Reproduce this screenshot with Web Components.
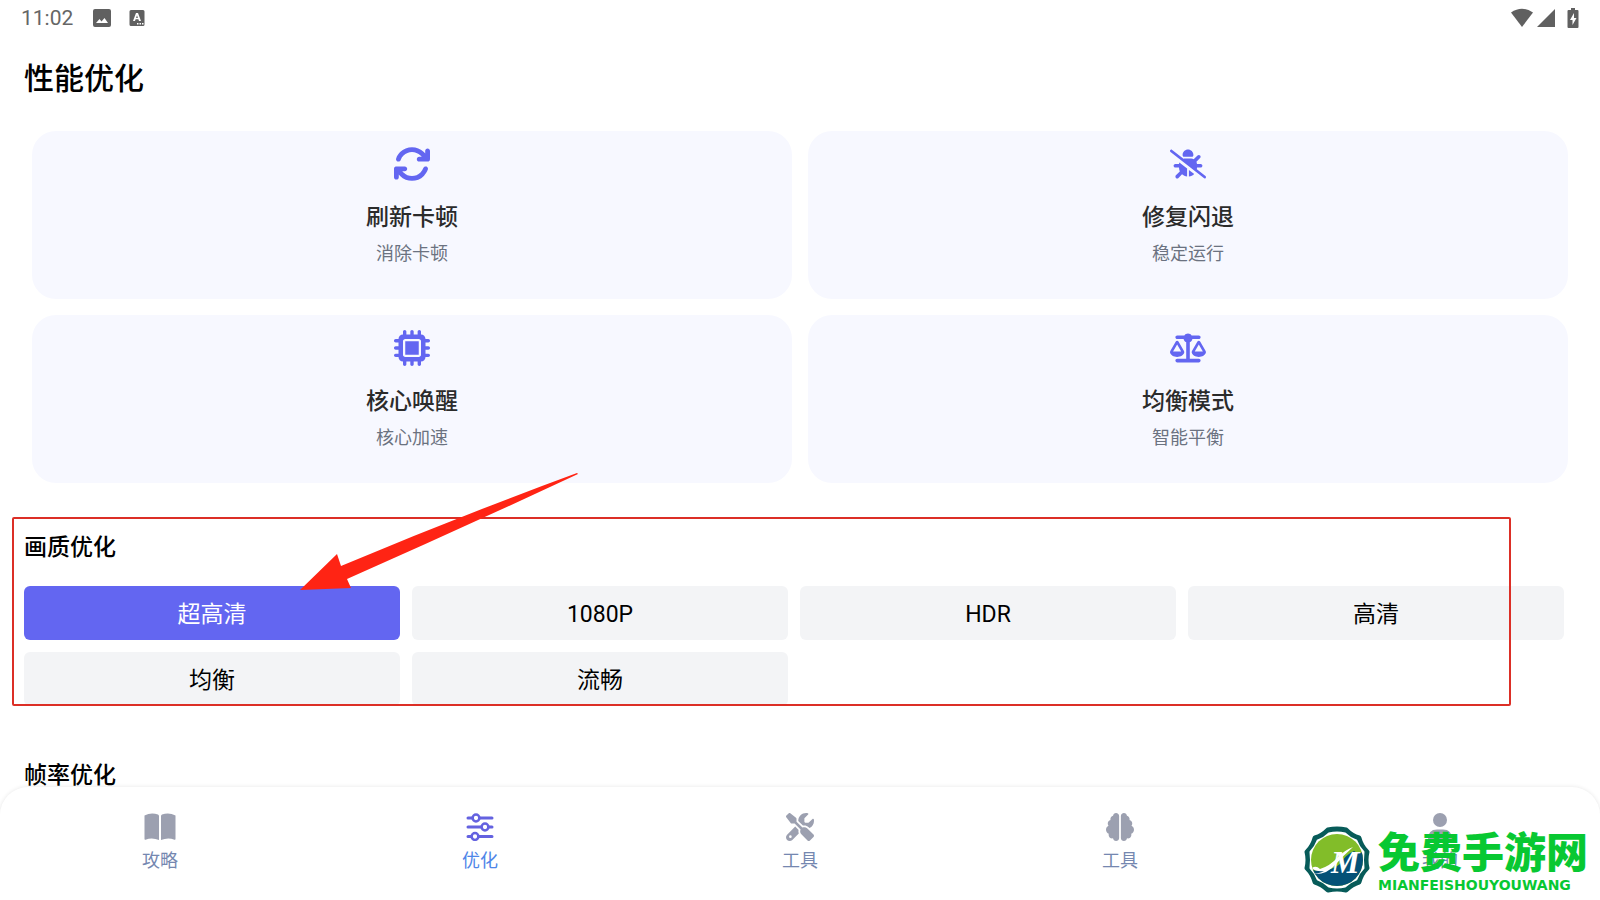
<!DOCTYPE html>
<html lang="zh-CN">
<head>
<meta charset="utf-8">
<meta name="viewport" content="width=device-width, initial-scale=1">
<title>性能优化</title>
<style>
    html, body { height: 100%; margin: 0; }
    body {
        background: #ffffff;
        color: #000000;
        font-family: Roboto, "Noto Sans CJK SC", sans-serif;
        overflow: hidden;
    }
</style>
</head>
<body>
<app-page>
    <status-bar slot="status" time="11:02"></status-bar>
    <h1 slot="title">性能优化</h1>
    <feature-card slot="features" icon="rotate"><span slot="name">刷新卡顿</span>消除卡顿</feature-card>
    <feature-card slot="features" icon="bug"><span slot="name">修复闪退</span>稳定运行</feature-card>
    <feature-card slot="features" icon="chip"><span slot="name">核心唤醒</span>核心加速</feature-card>
    <feature-card slot="features" icon="scale"><span slot="name">均衡模式</span>智能平衡</feature-card>
    <option-section heading="画质优化" marked>
        <option-button active>超高清</option-button>
        <option-button>1080P</option-button>
        <option-button>HDR</option-button>
        <option-button>高清</option-button>
        <option-button>均衡</option-button>
        <option-button>流畅</option-button>
    </option-section>
    <option-section heading="帧率优化"></option-section>
    <tab-bar slot="tabs">
        <tab-item icon="book">攻略</tab-item>
        <tab-item icon="sliders" active>优化</tab-item>
        <tab-item icon="tools">工具</tab-item>
        <tab-item icon="brain">工具</tab-item>
        <tab-item icon="user">我的</tab-item>
    </tab-bar>
    <site-mark slot="mark"></site-mark>
</app-page>

<script>
const icons = {
    rotate: `<svg viewBox="16 16 480 480" width="36" height="36"><path d="M105.1 202.6c7.7-21.8 20.2-42.3 37.8-59.8c62.5-62.5 163.8-62.5 226.3 0L386.3 160H352c-17.7 0-32 14.3-32 32s14.3 32 32 32H463.9c17.7 0 32-14.3 32-32V80c0-17.7-14.3-32-32-32s-32 14.3-32 32v35.2L414.4 97.6c-87.5-87.5-229.3-87.5-316.8 0C73.2 122 55.6 150.7 44.8 181.4c-5.9 16.7 2.9 34.9 19.5 40.8s34.9-2.9 40.8-19.5zM39 289.3c-5 1.5-9.8 4.2-13.7 8.2c-4 4-6.7 8.8-8.1 14c-.3 1.2-.6 2.5-.8 3.8c-.3 1.7-.4 3.4-.4 5.1V432c0 17.7 14.3 32 32 32s32-14.3 32-32V396.9l17.6 17.5c87.5 87.4 229.3 87.4 316.7 0c24.4-24.4 42.1-53.1 52.9-83.7c5.9-16.7-2.9-34.9-19.5-40.8s-34.9 2.9-40.8 19.5c-7.7 21.8-20.2 42.3-37.8 59.8c-62.5 62.5-163.8 62.5-226.3 0L125.6 352H160c17.7 0 32-14.3 32-32s-14.3-32-32-32H48.4c-1.6 0-3.2 .1-4.8 .3s-3.1 .5-4.6 1z"/></svg>`,
    bug: `<svg viewBox="0 -64 640 640" width="36" height="36"><path d="M38.8 5.1C28.4-3.1 13.3-1.2 5.1 9.2S-1.2 34.7 9.2 42.9l592 464c10.4 8.2 25.5 6.3 33.7-4.1s6.3-25.5-4.1-33.7L477.4 348.9c1.7-9.4 2.6-19 2.6-28.9h64c17.7 0 32-14.3 32-32s-14.3-32-32-32H479.7c-1.1-14.1-5-27.5-11.1-39.5c.7-.6 1.4-1.2 2.1-1.9l64-64c12.5-12.5 12.5-32.8 0-45.3s-32.8-12.5-45.3 0l-64 64c-.7 .7-1.3 1.4-1.9 2.1C409.2 164.1 393.1 160 376 160H264c-8.3 0-16.3 1-24 2.8L38.8 5.1zM320 0c-53 0-96 43-96 96v3.6c0 15.7 12.7 28.4 28.4 28.4H387.6c15.7 0 28.4-12.7 28.4-28.4V96c0-53-43-96-96-96zM160.3 256H96c-17.7 0-32 14.3-32 32s14.3 32 32 32h64c0 24.6 5.5 47.8 15.4 68.6c-2.2 1.3-4.2 2.9-6 4.8l-64 64c-12.5 12.5-12.5 32.8 0 45.3s32.8 12.5 45.3 0l63.1-63.1c24.5 21.8 55.8 36.2 90.3 39.6V335.5L166.7 227.3c-3.4 9-5.6 18.7-6.4 28.7zM336 479.2c36.6-3.6 69.7-19.6 94.8-43.8L336 360.7V479.2z"/></svg>`,
    chip: `<svg viewBox="0 0 512 512" width="36" height="36"><path fill-rule="evenodd" d="M176 24c0-13.3-10.7-24-24-24s-24 10.7-24 24V64c-35.3 0-64 28.7-64 64H24c-13.3 0-24 10.7-24 24s10.7 24 24 24H64v56H24c-13.3 0-24 10.7-24 24s10.7 24 24 24H64v56H24c-13.3 0-24 10.7-24 24s10.7 24 24 24H64c0 35.3 28.7 64 64 64v40c0 13.3 10.7 24 24 24s24-10.7 24-24V448h56v40c0 13.3 10.7 24 24 24s24-10.7 24-24V448h56v40c0 13.3 10.7 24 24 24s24-10.7 24-24V448c35.3 0 64-28.7 64-64h40c13.3 0 24-10.7 24-24s-10.7-24-24-24H448V280h40c13.3 0 24-10.7 24-24s-10.7-24-24-24H448V176h40c13.3 0 24-10.7 24-24s-10.7-24-24-24H448c0-35.3-28.7-64-64-64V24c0-13.3-10.7-24-24-24s-24 10.7-24 24V64H280V24c0-13.3-10.7-24-24-24s-24 10.7-24 24V64H176V24zM160 128H352c17.7 0 32 14.3 32 32V352c0 17.7-14.3 32-32 32H160c-17.7 0-32-14.3-32-32V160c0-17.7 14.3-32 32-32zm192 32H160V352H352V160z"/></svg>`,
    scale: `<svg viewBox="0 -64 640 640" width="36" height="36"><path fill-rule="evenodd" d="M384 32H512c17.7 0 32 14.3 32 32s-14.3 32-32 32H398.4c-5.2 25.8-22.9 47.1-46.4 57.3V448H512c17.7 0 32 14.3 32 32s-14.3 32-32 32H128c-17.7 0-32-14.3-32-32s14.3-32 32-32H288V153.3c-23.5-10.3-41.2-31.6-46.4-57.3H128c-17.7 0-32-14.3-32-32s14.3-32 32-32H256c14.6-19.4 37.8-32 64-32s49.4 12.6 64 32zm55.6 288H584.4L512 195.8 439.6 320zM512 416c-62.9 0-115.2-34-126-78.9c-2.6-11 1-22.3 6.7-32.1l95.2-163.2c5-8.6 14.2-13.8 24.1-13.8s19.1 5.3 24.1 13.8l95.2 163.2c5.7 9.8 9.3 21.1 6.7 32.1C627.2 382 574.9 416 512 416zM126.8 195.8L54.4 320H199.3L126.8 195.8zM.9 337.1c-2.6-11 1-22.3 6.7-32.1l95.2-163.2c5-8.6 14.2-13.8 24.1-13.8s19.1 5.3 24.1 13.8l95.2 163.2c5.7 9.8 9.3 21.1 6.7 32.1C242 382 189.7 416 126.8 416S11.7 382 .9 337.1z"/></svg>`,
    book: `<svg viewBox="0 0 32 28" width="32" height="28"><path d="M0.500 2.500Q7 -1 14 1.500Q15 2 15 3V27Q8 24 1.500 26.700Q0.500 27 0.500 26ZM31.500 2.500Q25 -1 18 1.500Q17 2 17 3V27Q24 24 30.500 26.700Q31.500 27 31.500 26Z"/></svg>`,
    sliders: `<svg viewBox="0 0 28 28" width="28" height="28"><g fill="none" stroke="currentColor" stroke-width="3" stroke-linecap="round"><path d="M2 5H6.500M13.500 5H26M2 14H15M22.500 14H26M2 23.500H5M12.500 23.500H26"/><g stroke-width="2.500"><circle cx="10" cy="5" r="3.400"/><circle cx="19" cy="14" r="3.400"/><circle cx="9" cy="23.500" r="3.400"/></g></g></svg>`,
    tools: `<svg viewBox="0 0 512 512" width="28" height="28"><path fill-rule="evenodd" d="M78.6 5C69.1-2.4 55.6-1.5 47 7L7 47c-8.5 8.5-9.4 22-2.1 31.6l80 104c4.5 5.9 11.6 9.4 19 9.4h54.1l109 109c-14.7 29-10 65.4 14.3 89.6l112 112c12.5 12.5 32.8 12.5 45.3 0l64-64c12.5-12.5 12.5-32.8 0-45.3l-112-112c-24.2-24.2-60.6-29-89.6-14.3l-109-109V104c0-7.5-3.5-14.5-9.4-19L78.6 5zM19.900 396.100C7.200 408.800 0 426.100 0 444.100C0 481.600 30.400 512 67.900 512c18 0 35.300-7.200 48-19.900L233.700 374.300c-7.800-20.900-9-43.600-3.600-65.100l-61.700-61.700L19.900 396.100zM512 144c0-10.500-1.100-20.700-3.200-30.500c-2.400-11.200-16.100-14.100-24.200-6l-63.900 63.900c-3 3-7.100 4.700-11.300 4.700H352c-8.800 0-16-7.200-16-16V102.600c0-4.200 1.700-8.300 4.700-11.300l63.900-63.900c8.100-8.100 5.200-21.800-6-24.200C388.700 1.100 378.500 0 368 0C288.500 0 224 64.500 224 144l0 .8 85.300 85.300c36-9.100 75.800 .5 104 28.700L429 274.500c49-23 83-72.800 83-130.500zM56 432a24 24 0 1 1 48 0 24 24 0 1 1 -48 0z"/></svg>`,
    brain: `<svg viewBox="0 0 512 512" width="28" height="28"><path d="M184 0c30.900 0 56 25.100 56 56V456c0 30.900-25.100 56-56 56c-28.900 0-52.700-21.900-55.700-50.100c-5.200 1.400-10.700 2.100-16.300 2.100c-35.300 0-64-28.700-64-64c0-7.400 1.300-14.600 3.600-21.200C21.400 367.400 0 338.200 0 304c0-31.900 18.700-59.500 45.800-72.300C37.100 220.800 32 207 32 192c0-30.700 21.600-56.300 50.400-62.600C80.800 123.900 80 118 80 112c0-29.900 20.600-55.100 48.300-62.100C131.300 21.900 155.100 0 184 0zM328 0c28.900 0 52.600 21.900 55.700 49.900c27.800 7 48.300 32.100 48.300 62.100c0 6-.8 11.900-2.400 17.400c28.800 6.200 50.400 31.900 50.400 62.600c0 15-5.100 28.800-13.800 39.700C493.300 244.500 512 272.100 512 304c0 34.200-21.400 63.400-51.600 74.800c2.300 6.600 3.600 13.800 3.600 21.200c0 35.300-28.700 64-64 64c-5.600 0-11.100-.7-16.300-2.100c-3 28.200-26.800 50.100-55.700 50.100c-30.900 0-56-25.100-56-56V56c0-30.900 25.100-56 56-56z"/></svg>`,
    user: `<svg viewBox="0 0 28 28" width="28" height="28"><circle cx="14" cy="7" r="7"/><path d="M2 26Q2 16.500 11 16.500H17Q26 16.500 26 26Q26 27 25 27H3Q2 27 2 26Z"/></svg>`
};

class BaseElement extends HTMLElement {
    connectedCallback(){
        if (this.shadowRoot) return;
        const template = document.createElement("template");
        template.innerHTML = this.html();
        this.attachShadow({mode: "open"}).appendChild(template.content.cloneNode(true));
    }
}

class AppPage extends BaseElement {
    html(){
        return `
            <style>
                :host {
                    display: flex;
                    flex-direction: column;
                    height: 100vh;
                    position: relative;
                }
                main {
                    flex: 1;
                    min-height: 0;
                    overflow: hidden;
                }
                ::slotted(h1) {
                    margin: 0;
                    padding: 24px 24px 33px;
                    font-size: 30px;
                    line-height: 38px;
                    font-weight: 500;
                }
                .features {
                    display: grid;
                    grid-template-columns: 1fr 1fr;
                    gap: 16px;
                    padding: 0 32px 34px;
                }
            </style>
            <slot name="status"></slot>
            <main>
                <slot name="title"></slot>
                <div class="features"><slot name="features"></slot></div>
                <slot></slot>
            </main>
            <slot name="tabs"></slot>
            <slot name="mark"></slot>
        `;
    }
}

class StatusBar extends BaseElement {
    html(){
        return `
            <style>
                :host {
                    display: flex;
                    justify-content: space-between;
                    align-items: center;
                    height: 36px;
                    padding: 0 21px 0 21px;
                    color: #666666;
                    font-size: 21px;
                }
                div { display: flex; align-items: center; }
                svg { fill: #606060; display: block; }
                .left { gap: 18px; }
                .left span { margin-right: 2px; }
                .right { gap: 4px; }
                .battery { margin-left: 8px; }
            </style>
            <div class="left">
                <span>${this.getAttribute("time")}</span>
                <svg width="18" height="18" viewBox="0 0 18 18"><path fill-rule="evenodd" d="M2 0H16Q18 0 18 2V16Q18 18 16 18H2Q0 18 0 16V2Q0 0 2 0ZM3 14H15L11.500 9L8.500 12.500L6.500 10Z"/></svg>
                <svg width="16" height="18" viewBox="0 0 16 18"><path fill-rule="evenodd" d="M2 1H14Q15.500 1 15.500 2.500V15.500Q15.500 17 14 17H2Q0.500 17 0.500 15.500V2.500Q0.500 1 2 1ZM7 4L4 12H6L6.600 10.300H9.400L10 12H12L9 4ZM8 6.300L8.900 8.900H7.100ZM8 14V15.500H9.500V14ZM10.500 14V15.500H12V14ZM13 14V15.500H14.500V14Z"/></svg>
            </div>
            <div class="right">
                <svg width="22" height="20" viewBox="0 0 22 20"><path d="M0 4.500Q11 -3 22 4.500L11 19Z"/></svg>
                <svg width="18" height="18" viewBox="0 0 18 18"><path d="M18 0V18H0Z"/></svg>
                <svg class="battery" width="12" height="20" viewBox="0 0 12 20"><path fill-rule="evenodd" d="M4 0H8V2H10.500Q11.500 2 11.500 3V19Q11.500 20 10.500 20H1.500Q0.500 20 0.500 19V3Q0.500 2 1.500 2H4ZM7 5L3 12H5.500V17L9.500 10H7Z"/></svg>
            </div>
        `;
    }
}

class FeatureCard extends BaseElement {
    html(){
        return `
            <style>
                :host { display: block; }
                button {
                    display: flex;
                    flex-direction: column;
                    align-items: center;
                    width: 100%;
                    height: 168px;
                    padding: 15px 16px;
                    border: 0;
                    border-radius: 24px;
                    background: #f7f8ff;
                    color: #6b7280;
                    font: inherit;
                    font-size: 18px;
                    line-height: 24px;
                }
                svg { fill: #6366f1; display: block; }
                .name {
                    margin: 20px 0 8px;
                    color: #2b2b2b;
                    font-size: 23px;
                    line-height: 32px;
                    font-weight: 500;
                }
            </style>
            <button type="button">
                ${icons[this.getAttribute("icon")]}
                <span class="name"><slot name="name"></slot></span>
                <span><slot></slot></span>
            </button>
        `;
    }
}

class OptionSection extends BaseElement {
    html(){
        return `
            <style>
                :host {
                    display: block;
                    position: relative;
                    padding: 0 36px 0 24px;
                    margin-bottom: 39px;
                }
                h2 {
                    margin: 0;
                    padding: 15px 0 22px;
                    font-size: 23px;
                    line-height: 32px;
                    font-weight: 500;
                }
                .grid {
                    display: grid;
                    grid-template-columns: repeat(4, 1fr);
                    gap: 12px;
                }
                .frame {
                    display: none;
                    position: absolute;
                    inset: 0 89px 0 12px;
                    border: 2px solid #dc2f26;
                    border-radius: 2px;
                }
                .arrow {
                    display: none;
                    position: absolute;
                    left: 300px;
                    top: -44px;
                }
                :host([marked]) .frame, :host([marked]) .arrow { display: block; }
            </style>
            <h2>${this.getAttribute("heading")}</h2>
            <div class="grid"><slot></slot></div>
            <div class="frame"></div>
            <svg class="arrow" width="280" height="120" viewBox="0 0 280 120"><path fill="#ff2414" d="M0 117L37 81L41 93Q160 43 277 0L278 1Q160 56 47 106L51 115Z"/></svg>
        `;
    }
}

class OptionButton extends BaseElement {
    html(){
        return `
            <style>
                :host { display: block; }
                button {
                    display: block;
                    width: 100%;
                    height: 54px;
                    padding: 4px 0 0;
                    border: 0;
                    border-radius: 6px;
                    background: #f3f4f6;
                    color: #000000;
                    font: inherit;
                    font-size: 23px;
                    line-height: 50px;
                }
                :host([active]) button { background: #6366f1; color: #ffffff; }
            </style>
            <button type="button"><slot></slot></button>
        `;
    }
}

class TabBar extends BaseElement {
    html(){
        return `
            <style>
                :host {
                    display: block;
                    position: relative;
                    border-radius: 28px 28px 0 0;
                    background: #ffffff;
                    box-shadow: 0 0 4px rgba(0, 0, 0, 0.1);
                }
                nav {
                    display: grid;
                    grid-template-columns: repeat(5, 1fr);
                    padding: 26px 0 27px;
                }
            </style>
            <nav><slot></slot></nav>
        `;
    }
}

class TabItem extends BaseElement {
    html(){
        return `
            <style>
                :host { display: block; }
                a {
                    display: flex;
                    flex-direction: column;
                    align-items: center;
                    gap: 7px;
                    color: #7587b0;
                    font-size: 18px;
                    line-height: 25px;
                    text-decoration: none;
                }
                svg { display: block; color: #9ca0b0; fill: currentColor; }
                :host([active]) a { color: #4f86e8; }
                :host([active]) svg { color: #6462e0; }
            </style>
            <a href="#">${icons[this.getAttribute("icon")]}<span><slot></slot></span></a>
        `;
    }
}

class SiteMark extends BaseElement {
    html(){
        return `
            <style>
                :host {
                    display: flex;
                    align-items: center;
                    gap: 7px;
                    position: absolute;
                    right: 12px;
                    bottom: 6px;
                    color: #08c832;
                    pointer-events: none;
                }
                svg { display: block; }
                .name {
                    margin-bottom: 3px;
                    font: 900 42px/46px "Noto Sans CJK SC", sans-serif;
                }
                .latin {
                    font: 600 14px/18px "DejaVu Sans", sans-serif;
                }
            </style>
            <svg width="68" height="68" viewBox="0 0 68 68">
                <defs><clipPath id="disc"><circle cx="34" cy="34" r="26"/></clipPath></defs>
                <g stroke-linejoin="round">
                    <path fill="#075b59" stroke="#075b59" stroke-width="5" d="M25 4Q34 2 43 4Q49 10 56 12Q58 20 64 26Q62 34 64 42Q58 48 56 56Q49 58 43 64Q34 62 25 64Q19 58 12 56Q10 48 4 42Q6 34 4 26Q10 20 12 12Q19 10 25 4Z"/>
                    <path fill="#ffffff" stroke="#ffffff" stroke-width="3" d="M26 8Q34 6 42 8Q47 13 53 15Q55 21 60 26Q59 34 60 42Q55 47 53 53Q47 55 42 60Q34 62 26 60Q21 55 15 53Q13 47 8 42Q9 34 8 26Q13 21 15 15Q21 13 26 8Z"/>
                </g>
                <g clip-path="url(#disc)">
                    <path fill="#82bd29" d="M0 0H68V68H0Z"/>
                    <path fill="#045177" d="M68 21Q57 30 51 25Q42 29 37 38Q26 47 8 44V68H68Z"/>
                    <path fill="#ffffff" d="M9 42Q13 39 17 43Q27 40 35 31Q42 24 50 21Q40 30 33 38Q24 49 10 48Q18 47 21 45Q13 46 9 42Z"/>
                </g>
                <text x="28" y="47" fill="#ffffff" font-family="Liberation Serif, serif" font-size="32" font-style="italic" font-weight="700">M</text>
            </svg>
            <div>
                <div class="name">免费手游网</div>
                <div class="latin">MIANFEISHOUYOUWANG</div>
            </div>
        `;
    }
}

customElements.define("status-bar", StatusBar);
customElements.define("feature-card", FeatureCard);
customElements.define("option-button", OptionButton);
customElements.define("option-section", OptionSection);
customElements.define("tab-item", TabItem);
customElements.define("tab-bar", TabBar);
customElements.define("site-mark", SiteMark);
customElements.define("app-page", AppPage);
</script>
</body>
</html>
